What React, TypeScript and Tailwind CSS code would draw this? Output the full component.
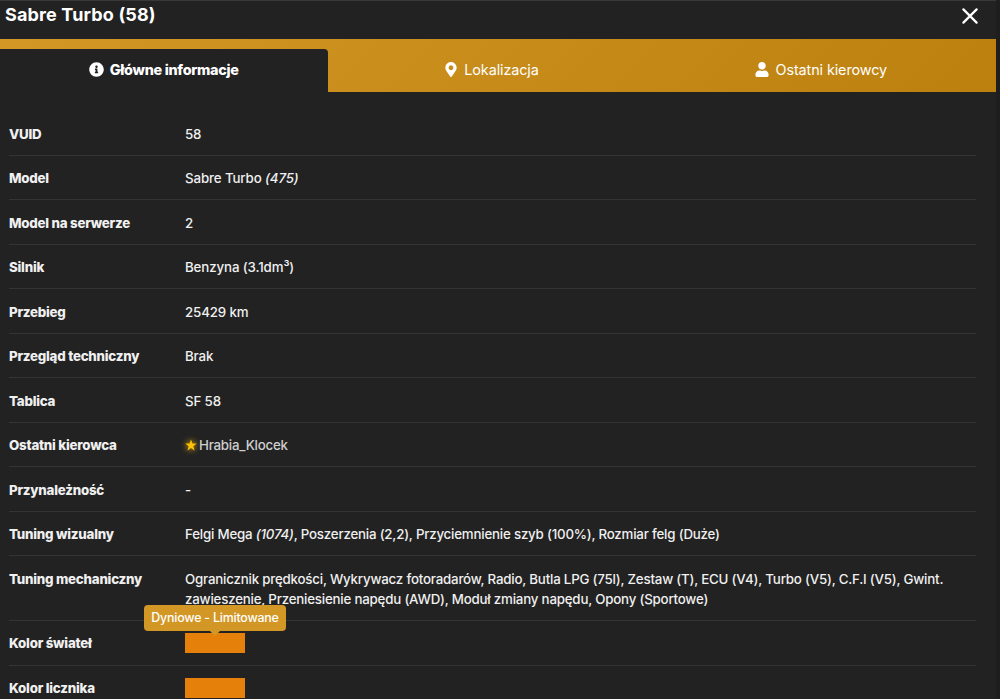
import type { ReactNode } from "react";
import { FaInfoCircle, FaMapMarkerAlt, FaUser } from "react-icons/fa";

const rows: { label: string; value: ReactNode; tall?: boolean; long?: boolean }[] = [
  { label: "VUID", value: "58" },
  { label: "Model", value: <>Sabre Turbo <em>(475)</em></> },
  { label: "Model na serwerze", value: "2" },
  { label: "Silnik", value: "Benzyna (3.1dm³)" },
  { label: "Przebieg", value: "25429 km" },
  { label: "Przegląd techniczny", value: "Brak" },
  { label: "Tablica", value: "SF 58" },
  {
    label: "Ostatni kierowca",
    value: (
      <span className="flex items-center gap-[2px] tracking-[-0.23px] text-[#cfcfcf]">
        <svg className="size-[12px] overflow-visible text-[#ffc107] drop-shadow-[0_0_3px_#ffc107]" viewBox="0 0 24 24" fill="currentColor">
          <path d="M12 .8l2.9 8.2h8.7l-7 5.3 2.6 8.6L12 17.8l-7.2 5.1 2.6-8.6-7-5.3h8.7z" />
        </svg>
        Hrabia_Klocek
      </span>
    ),
  },
  { label: "Przynależność", value: "-" },
  {
    label: "Tuning wizualny",
    long: true,
    value: <>Felgi Mega <em>(1074)</em>, Poszerzenia (2,2), Przyciemnienie szyb (100%), Rozmiar felg (Duże)</>,
  },
  {
    label: "Tuning mechaniczny",
    tall: true,
    long: true,
    value: (
      <>
        Ogranicznik prędkości, Wykrywacz fotoradarów, Radio, Butla LPG (75l), Zestaw (T), ECU (V4), Turbo (V5), C.F.I (V5), Gwint.
        <br />
        zawieszenie, Przeniesienie napędu (AWD), Moduł zmiany napędu, Opony (Sportowe)
      </>
    ),
  },
  {
    label: "Kolor świateł",
    value: (
      <div className="relative h-[20px] w-[60px] bg-[#e5800b]">
        <div className="absolute bottom-[22px] left-1/2 flex h-[26px] w-[142px] -translate-x-1/2 items-center justify-center rounded bg-[#d39725] text-[12.4px] font-medium tracking-[-0.2px] whitespace-nowrap text-white">
          Dyniowe - Limitowane
          <svg className="absolute top-full left-[66px] h-[5px] w-[10px]" viewBox="0 0 10 5">
            <path d="M0 0h10L5 5z" fill="#d39725" />
          </svg>
        </div>
      </div>
    ),
  },
  { label: "Kolor licznika", value: <div className="h-[20px] w-[60px] bg-[#e5800b]" /> },
];

export default function App() {
  return (
    <div className="h-[699px] overflow-hidden bg-[#1e1e1e] font-['Inter',sans-serif] text-[13.3px] leading-[20px] text-[#f0f0f0]">
      <div className="h-full w-[996px] border-t border-[#383838] bg-[#222222]">
        <header className="flex h-[38px] items-start justify-between pl-[5px] text-white">
          <h1 className="pt-[1px] text-[18px] leading-[26px] font-bold tracking-[0.15px]">Sabre Turbo (58)</h1>
          <button aria-label="Zamknij" className="mt-[7px] mr-[18.5px]">
            <svg className="block size-[16px]" viewBox="0 0 16 16" fill="none" stroke="white" strokeWidth="2.2" strokeLinecap="round">
              <path d="M1.4 1.4l13.2 13.2M14.6 1.4L1.4 14.6" />
            </svg>
          </button>
        </header>
        <nav className="flex h-[53px] items-end bg-[linear-gradient(135deg,#d39725,#bb800d)] text-[14.4px] text-white">
          <div className="flex h-[43px] w-[327.5px] items-center justify-center gap-[6px] rounded-tr bg-[#222222] pb-[2px] font-extrabold tracking-[-0.3px]">
            <FaInfoCircle className="size-[15px]" />
            Główne informacje
          </div>
          <div className="flex h-[43px] w-[329px] items-center justify-center gap-[7px] pb-[2px] tracking-[-0.1px]">
            <FaMapMarkerAlt className="h-[15px] w-[12px]" />
            Lokalizacja
          </div>
          <div className="flex h-[43px] flex-1 items-center justify-center gap-[7px] pr-[11px] pb-[2px] tracking-[-0.1px]">
            <FaUser className="h-[15px] w-[14px]" />
            Ostatni kierowcy
          </div>
        </nav>
        <dl className="mt-[19px] ml-[9px] w-[967px]">
          {rows.map((row) => (
            <div
              key={row.label}
              className={`flex border-b border-[#343434] pt-[12.5px] ${row.tall ? "h-[64.5px]" : "h-[44.55px]"}`}
            >
              <dt className="w-[176px] shrink-0 font-extrabold tracking-[-0.22px]">{row.label}</dt>
              <dd className={`font-medium whitespace-nowrap ${row.long ? "tracking-[-0.2px]" : "tracking-[-0.12px]"}`}>{row.value}</dd>
            </div>
          ))}
        </dl>
      </div>
    </div>
  );
}
